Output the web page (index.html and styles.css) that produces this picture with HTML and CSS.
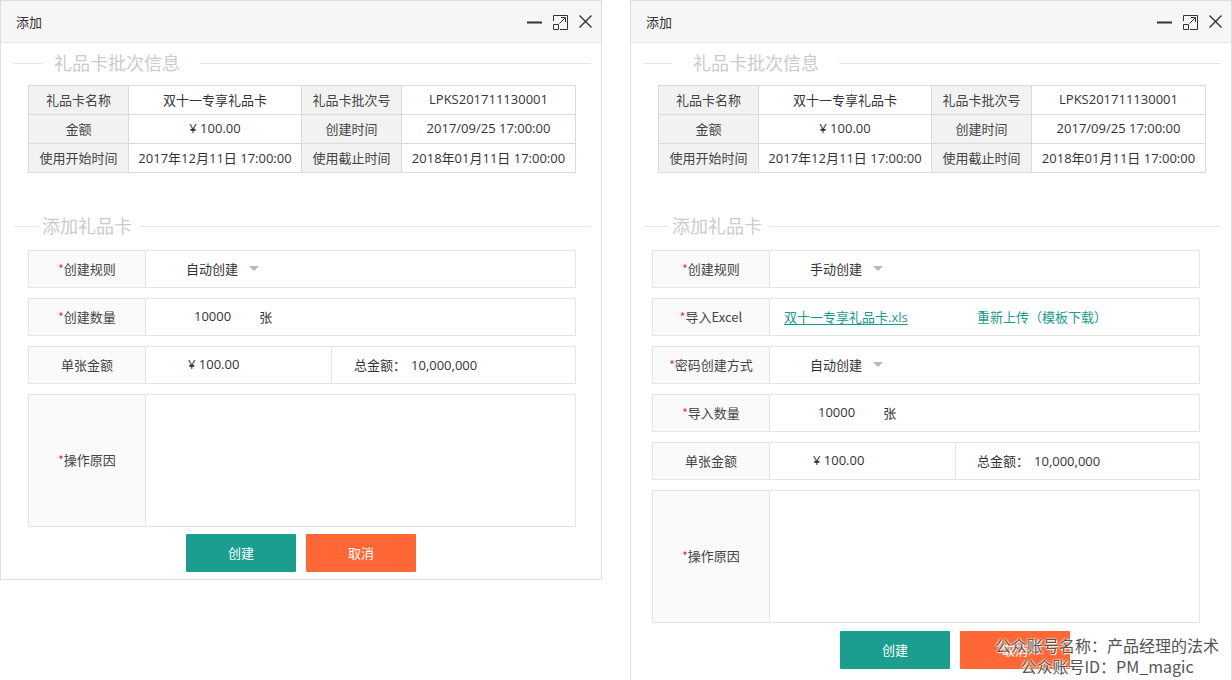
FILE: index.html
```html
<!DOCTYPE html>
<html lang="zh-CN">
<head>
<meta charset="utf-8">
<title>添加礼品卡</title>
<link rel="stylesheet" href="styles.css">
</head>
<body>
<div class="page">
  <section class="window win-a">
    <header class="win-head">
      <span class="win-title">添加</span>
      <div class="win-ctrls">
        <svg class="ic ic-min" width="15" height="14" viewBox="0 0 15 14"><path d="M0 7.5H15" stroke="#333" stroke-width="2"/></svg>
        <svg class="ic ic-max" width="15" height="15" viewBox="0 0 15 15"><path d="M0.5 6V0.5H14.5V14.5H7" fill="none" stroke="#333"/><path d="M0.5 9.5H5.5V14.5H0.5Z" fill="none" stroke="#333"/><path d="M6.5 8.5L12 3M8 2.5H12.5V7" fill="none" stroke="#333"/></svg>
        <svg class="ic ic-close" width="13" height="13" viewBox="0 0 13 13"><path d="M0.5 0.5L12.5 12.5M12.5 0.5L0.5 12.5" stroke="#333" stroke-width="1.4"/></svg>
      </div>
    </header>
    <div class="win-body">
      <div class="sec-title sec-title--narrow"><span>礼品卡批次信息</span></div>
      <div class="info-grid">
        <div class="c lab">礼品卡名称</div><div class="c">双十一专享礼品卡</div><div class="c lab">礼品卡批次号</div><div class="c">LPKS201711130001</div>
        <div class="c lab">金额</div><div class="c">¥ 100.00</div><div class="c lab">创建时间</div><div class="c">2017/09/25 17:00:00</div>
        <div class="c lab">使用开始时间</div><div class="c">2017年12月11日 17:00:00</div><div class="c lab">使用截止时间</div><div class="c">2018年01月11日 17:00:00</div>
      </div>
      <div class="sec-title sec-title--add"><span>添加礼品卡</span></div>
      <div class="form form-a">
        <div class="frow">
          <div class="flabel"><i>*</i>创建规则</div>
          <div class="fval pl40"><span>自动创建</span><span class="caret"></span></div>
        </div>
        <div class="frow">
          <div class="flabel"><i>*</i>创建数量</div>
          <div class="fval pl48"><span>10000</span><span class="unit">张</span></div>
        </div>
        <div class="frow">
          <div class="flabel">单张金额</div>
          <div class="fval split"><div class="half pl42">¥ 100.00</div><div class="total">总金额：<span class="num">10,000,000</span></div></div>
        </div>
        <div class="frow frow--tall">
          <div class="flabel"><i>*</i>操作原因</div>
          <div class="fval"></div>
        </div>
      </div>
      <div class="actions actions-a">
        <button class="btn btn-ok">创建</button>
        <button class="btn btn-cancel">取消</button>
      </div>
    </div>
  </section>

  <section class="window win-b">
    <header class="win-head">
      <span class="win-title">添加</span>
      <div class="win-ctrls">
        <svg class="ic ic-min" width="15" height="14" viewBox="0 0 15 14"><path d="M0 7.5H15" stroke="#333" stroke-width="2"/></svg>
        <svg class="ic ic-max" width="15" height="15" viewBox="0 0 15 15"><path d="M0.5 6V0.5H14.5V14.5H7" fill="none" stroke="#333"/><path d="M0.5 9.5H5.5V14.5H0.5Z" fill="none" stroke="#333"/><path d="M6.5 8.5L12 3M8 2.5H12.5V7" fill="none" stroke="#333"/></svg>
        <svg class="ic ic-close" width="13" height="13" viewBox="0 0 13 13"><path d="M0.5 0.5L12.5 12.5M12.5 0.5L0.5 12.5" stroke="#333" stroke-width="1.4"/></svg>
      </div>
    </header>
    <div class="win-body">
      <div class="sec-title sec-title--wide"><span>礼品卡批次信息</span></div>
      <div class="info-grid">
        <div class="c lab">礼品卡名称</div><div class="c">双十一专享礼品卡</div><div class="c lab">礼品卡批次号</div><div class="c">LPKS201711130001</div>
        <div class="c lab">金额</div><div class="c">¥ 100.00</div><div class="c lab">创建时间</div><div class="c">2017/09/25 17:00:00</div>
        <div class="c lab">使用开始时间</div><div class="c">2017年12月11日 17:00:00</div><div class="c lab">使用截止时间</div><div class="c">2018年01月11日 17:00:00</div>
      </div>
      <div class="sec-title sec-title--add"><span>添加礼品卡</span></div>
      <div class="form form-b">
        <div class="frow">
          <div class="flabel"><i>*</i>创建规则</div>
          <div class="fval pl40"><span>手动创建</span><span class="caret"></span></div>
        </div>
        <div class="frow">
          <div class="flabel"><i>*</i>导入Excel</div>
          <div class="fval pl14"><a class="file-link">双十一专享礼品卡.xls</a><a class="reupload">重新上传（模板下载）</a></div>
        </div>
        <div class="frow">
          <div class="flabel"><i>*</i>密码创建方式</div>
          <div class="fval pl40"><span>自动创建</span><span class="caret"></span></div>
        </div>
        <div class="frow">
          <div class="flabel"><i>*</i>导入数量</div>
          <div class="fval pl48"><span>10000</span><span class="unit">张</span></div>
        </div>
        <div class="frow">
          <div class="flabel">单张金额</div>
          <div class="fval split"><div class="half pl43">¥ 100.00</div><div class="total total-b">总金额：<span class="num">10,000,000</span></div></div>
        </div>
        <div class="frow frow--tall">
          <div class="flabel"><i>*</i>操作原因</div>
          <div class="fval"></div>
        </div>
      </div>
      <div class="actions actions-b">
        <button class="btn btn-ok">创建</button>
        <button class="btn btn-cancel">取消</button>
      </div>
    </div>
    <div class="watermark">
      <div>公众账号名称：产品经理的法术</div>
      <div>公众账号ID：PM_magic</div>
    </div>
  </section>
</div>
</body>
</html>
```

FILE: styles.css
```css
* { box-sizing: border-box; }
html, body { margin: 0; padding: 0; background: #fff; }
body {
  font-family: "Open Sans", "Noto Sans CJK SC", sans-serif;
  font-size: 13px;
  color: #333;
  overflow: hidden;
}
.page {
  display: flex;
  align-items: flex-start;
  gap: 28px;
  width: 1232px;
  height: 680px;
}
.window {
  position: relative;
  width: 602px;
  border: 1px solid #dedede;
  background: #fff;
}
.win-b { height: 720px; }
.win-head {
  height: 42px;
  background: #f6f6f6;
  border-bottom: 1px solid #e6e6e6;
  display: flex;
  align-items: center;
  justify-content: space-between;
  padding: 0 9px 0 15px;
}
.win-title { font-family: "Noto Sans CJK SC", sans-serif; font-size: 13px; color: #333; margin-top: -1px; }
.win-ctrls { display: flex; align-items: center; gap: 11px; }
.ic { display: block; }
.ic-max { margin-top: 1px; }

.win-body { padding-bottom: 7px; }

.sec-title {
  display: flex;
  align-items: center;
  height: 24px;
  margin-top: 7px;
  padding: 0 10px 0 13px;
  font-family: "Noto Sans CJK SC", sans-serif;
  font-size: 18px;
  color: #cbcbcb;
  line-height: 24px;
}
.sec-title::before, .sec-title::after {
  content: "";
  height: 1px;
  background: #e6e6e6;
  margin-top: 3px;
}
.sec-title::before { width: 28px; }
.sec-title::after { flex: 1; margin-left: 20px; }
.sec-title--narrow::before { margin-right: 12px; }
.sec-title--wide::before { margin-right: 21px; }
.sec-title--add { margin-top: 40px; }
.sec-title--add::before { width: 25px; margin-right: 3px; }
.sec-title--add::after { margin-left: 7px; }

.info-grid {
  display: grid;
  grid-template-columns: 100px 173px 100px 174px;
  width: 548px;
  margin: 11px 0 0 27px;
  border-top: 1px solid #dadada;
  border-left: 1px solid #dadada;
}
.info-grid .c {
  height: 29px;
  padding-bottom: 2px;
  border-right: 1px solid #dadada;
  border-bottom: 1px solid #dadada;
  display: flex;
  align-items: center;
  justify-content: center;
  white-space: nowrap;
  color: #333;
}
.info-grid .lab { background: #f2f2f2; font-family: "Noto Sans CJK SC", sans-serif; color: #444; }

.form {
  display: flex;
  flex-direction: column;
  gap: 10px;
  width: 548px;
  margin-top: 13px;
}
.form-a { margin-left: 27px; }
.form-b { margin-left: 21px; }
.frow {
  display: flex;
  height: 38px;
  border: 1px solid #e4e4e4;
}
.frow--tall { height: 133px; }
.flabel {
  width: 117px;
  flex: none;
  background: #fafafa;
  border-right: 1px solid #e4e4e4;
  display: flex;
  align-items: center;
  justify-content: center;
  font-family: "Noto Sans CJK SC", sans-serif;
  color: #444;
  white-space: nowrap;
  padding-bottom: 2px;
}
.flabel i { font-style: normal; color: #e0353b; font-size: 12px; }
.fval {
  flex: 1;
  display: flex;
  align-items: center;
  white-space: nowrap;
  color: #333;
  padding-bottom: 2px;
}
.pl14 { padding-left: 14px; }
.pl40 { padding-left: 40px; }
.pl42 { padding-left: 42px; }
.pl43 { padding-left: 43px; }
.pl48 { padding-left: 48px; }
.caret {
  width: 0; height: 0;
  margin-left: 11px;
  border-left: 5px solid transparent;
  border-right: 5px solid transparent;
  border-top: 5px solid #b8b8b8;
  margin-top: 1px;
}
.unit { margin-left: 28px; font-family: "Noto Sans CJK SC", sans-serif; }
.fval.split { align-items: stretch; padding-bottom: 0; }
.half {
  width: 186px;
  border-right: 1px solid #e4e4e4;
  display: flex;
  align-items: center;
  padding-bottom: 2px;
}
.total { display: flex; align-items: center; padding-left: 22px; padding-bottom: 1px; font-family: "Noto Sans CJK SC", sans-serif; }
.total-b { padding-left: 21px; }
.total .num { margin-left: 5px; font-family: "Open Sans", sans-serif; }
.file-link {
  width: 193px;
  color: #1a9a8a;
  text-decoration: underline;
  text-underline-offset: 2px;
}
.reupload { color: #1a9a8a; }

.actions { display: flex; gap: 10px; }
.actions-a { margin: 7px 0 0 185px; }
.actions-b { margin: 8px 0 0 209px; }
.btn {
  width: 110px;
  height: 38px;
  border: none;
  border-radius: 1px;
  color: #fff;
  font-family: "Noto Sans CJK SC", sans-serif;
  font-size: 13px;
  padding: 0 0 2px;
}
.btn-ok { background: #1b9e8e; }
.btn-cancel { background: #ff6836; }

.watermark {
  position: absolute;
  top: 634px;
  right: 12px;
  text-align: center;
  font-family: "Noto Sans CJK SC", sans-serif;
  font-size: 16px;
  line-height: 21px;
  color: #555;
  text-shadow: 0 0 2px #fff, 0 0 2px #fff, 1px 1px 0 rgba(255,255,255,0.8);
}
```
